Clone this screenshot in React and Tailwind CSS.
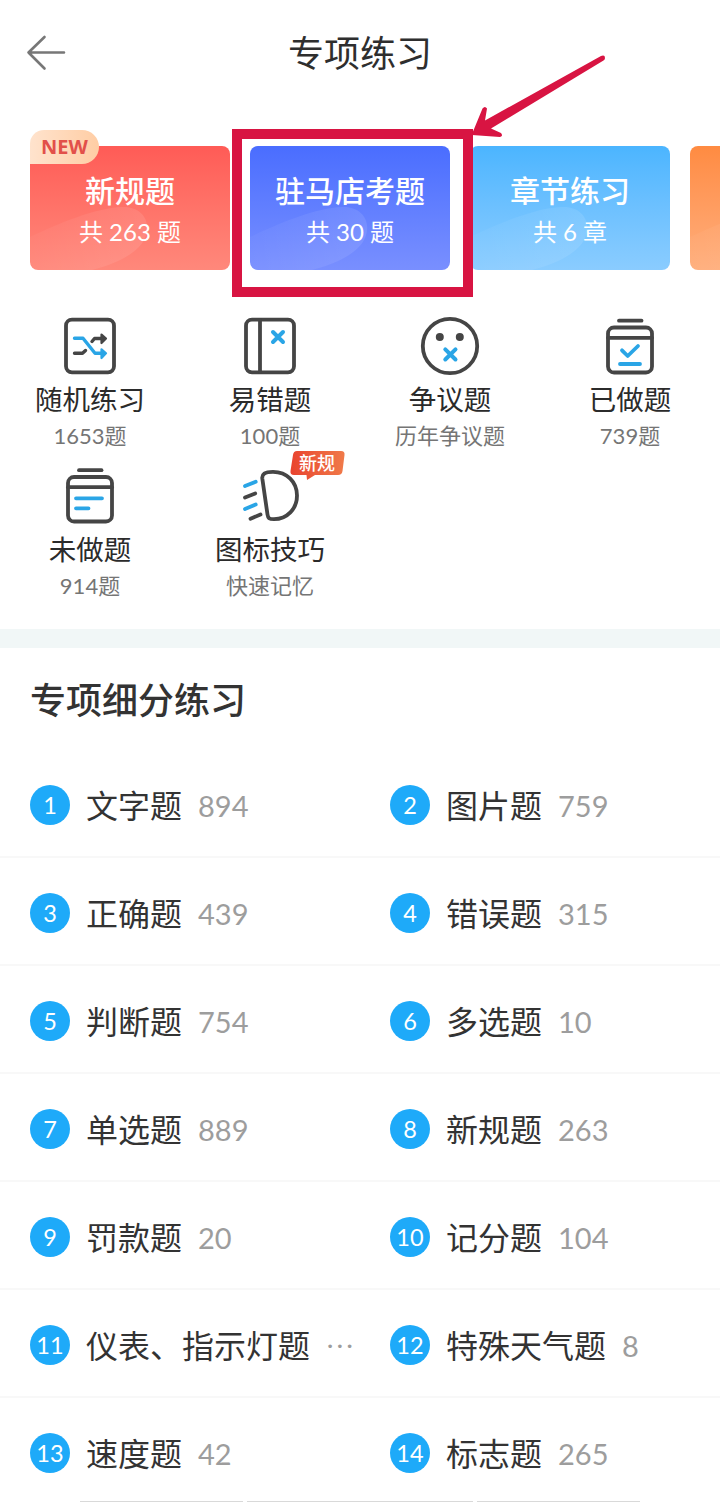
const DARK = "#454545";
const BLUE = "#2aa5e6";

const cards = [
	{ title: "新规题", sub: "共 263 题", bg: "from-[#ff5b56] to-[#ff887b]", isNew: true },
	{ title: "驻马店考题", sub: "共 30 题", bg: "from-[#4a6dff] to-[#798fff]", marked: true },
	{ title: "章节练习", sub: "共 6 章", bg: "from-[#4bb5ff] to-[#8accff]" },
	{ title: "", sub: "", bg: "from-[#ff8b41] to-[#ffae7c]" },
];

const tools = [
	{ label: "随机练习", sub: "1653题", Icon: ShuffleIcon },
	{ label: "易错题", sub: "100题", Icon: BookIcon },
	{ label: "争议题", sub: "历年争议题", Icon: FaceIcon },
	{ label: "已做题", sub: "739题", Icon: DoneIcon },
	{ label: "未做题", sub: "914题", Icon: TodoIcon },
	{ label: "图标技巧", sub: "快速记忆", Icon: LampIcon, tag: "新规" },
];

const topics = [
	["文字题", "894"],
	["图片题", "759"],
	["正确题", "439"],
	["错误题", "315"],
	["判断题", "754"],
	["多选题", "10"],
	["单选题", "889"],
	["新规题", "263"],
	["罚款题", "20"],
	["记分题", "104"],
	["仪表、指示灯题", "···"],
	["特殊天气题", "8"],
	["速度题", "42"],
	["标志题", "265"],
];

function IconBase({ children }) {
	return (
		<svg
			viewBox="0 0 60 60"
			className="size-[60px]"
			fill="none"
			stroke={DARK}
			strokeWidth="3.8"
			strokeLinecap="round"
			strokeLinejoin="round"
		>
			{children}
		</svg>
	);
}

function ShuffleIcon() {
	return (
		<IconBase>
			<rect x="6" y="3.7" width="48" height="52.6" rx="6" />
			<path d="M14.5 37.3H22.5L25.5 34.5M32 25.5L34.5 22.5H42" strokeWidth="3.4" />
			<path d="M41.5 18.5L46 22.5L41.5 27Z" fill={DARK} strokeWidth="2.2" />
			<path d="M14.5 22.3H23L35 37.3H42" stroke={BLUE} strokeWidth="3.4" />
			<path d="M41.5 33.3L46 37.3L41.5 42Z" fill={BLUE} stroke={BLUE} strokeWidth="2.2" />
		</IconBase>
	);
}

function BookIcon() {
	return (
		<IconBase>
			<rect x="6" y="3.7" width="48" height="52.6" rx="6" />
			<path d="M20 4V56" />
			<path d="M33 16L43 26M43 16L33 26" stroke={BLUE} strokeWidth="4" />
		</IconBase>
	);
}

function FaceIcon() {
	return (
		<IconBase>
			<circle cx="30" cy="30" r="27.2" />
			<circle cx="19.8" cy="21" r="4" fill={DARK} stroke="none" />
			<circle cx="39.8" cy="21" r="4" fill={DARK} stroke="none" />
			<path d="M25.3 33.3L35.5 43.5M35.5 33.3L25.3 43.5" stroke={BLUE} strokeWidth="4" />
		</IconBase>
	);
}

function DoneIcon() {
	return (
		<IconBase>
			<path d="M19 4.7H41.5" />
			<rect x="8" y="11.5" width="44" height="45" rx="6" />
			<path d="M8 21.8H52" />
			<path d="M22 34.3L27.7 40L38 30M20 48H40" stroke={BLUE} />
		</IconBase>
	);
}

function TodoIcon() {
	return (
		<IconBase>
			<path d="M19 4.2H41.5" />
			<rect x="8" y="11" width="44" height="44.5" rx="6" />
			<path d="M8 21.2H52" />
			<path d="M16 32.3H42M16 42.3H28.5" stroke={BLUE} />
		</IconBase>
	);
}

function LampIcon() {
	return (
		<IconBase>
			<path d="M22.3 12.5C21.8 8.3 24.5 5.8 33 5.8C47 5.8 57 16 57 29.5C57 43 47 53.2 34 53.2C29 53.2 28 52 27.5 48.5Z" />
			<path d="M5 20L15.7 15.8M5 43L15.7 38.5" stroke={BLUE} />
			<path d="M5 31.5L15.2 27.4M10.5 52.8L20.5 48.5" />
		</IconBase>
	);
}

function Card({ title, sub, bg, isNew, marked }) {
	return (
		<div className="relative h-[124px] w-[200px] shrink-0">
			<div
				className={`relative flex h-full flex-col items-center overflow-hidden rounded-lg bg-linear-to-b pt-[22px] text-white ${bg}`}
			>
				<svg viewBox="0 0 200 124" className="absolute inset-0">
					<defs>
						<linearGradient id="swoosh" x1="0" x2="1" y1="0" y2="0">
							<stop offset="0" stopColor="#fff" stopOpacity="0.03" />
							<stop offset="1" stopColor="#fff" stopOpacity="0.1" />
						</linearGradient>
					</defs>
					<path
						d="M0 91C30 77 65 62 92 61C112 60 122 76 115 92C108 108 85 118 62 124H0Z"
						fill="url(#swoosh)"
					/>
				</svg>
				<div className="relative h-[46px] text-[30px] leading-11 font-medium">{title}</div>
				<div className="relative h-9 text-2xl leading-9">{sub}</div>
			</div>
			{isNew && (
				<div className="absolute -top-4 left-0 flex h-[34px] w-[69px] items-center justify-center rounded-l-[14px] rounded-r-[17px] rounded-bl-none bg-linear-to-r from-[#ffe3cd] to-[#ffcda4] font-['Open_Sans',sans-serif] text-[20px] font-bold text-[#e2504a]">
					NEW
				</div>
			)}
			{marked && (
				<div className="absolute -top-[17px] -left-[18px] z-10 h-[168px] w-[241px] border-10 border-[#d81442]" />
			)}
		</div>
	);
}

function Tag({ text }) {
	return (
		<div className="absolute -top-4 left-[49px] h-[30px] w-14">
			<svg viewBox="0 0 56 30" className="absolute inset-0">
				<defs>
					<linearGradient id="tag" x1="0" x2="1" y1="0" y2="0">
						<stop offset="0" stopColor="#e9432f" />
						<stop offset="1" stopColor="#f07a49" />
					</linearGradient>
				</defs>
				<path
					d="M8 1H52Q56 1 55.5 5L53.5 21Q53 25 49 25H26L18 30L17.5 25H5Q1 25 1.5 21L4 5Q4.5 1 8 1Z"
					fill="url(#tag)"
				/>
			</svg>
			<span className="relative block text-center text-lg leading-[26px] font-medium text-white">
				{text}
			</span>
		</div>
	);
}

function Tool({ label, sub, Icon, tag }) {
	return (
		<div className="flex h-[150px] flex-col items-center text-center">
			<div className="relative">
				<Icon />
				{tag && <Tag text={tag} />}
			</div>
			<div className="mt-1 h-10 text-[27.5px] leading-10 text-[#2b2b2b]">{label}</div>
			<div className="h-8 text-[22px] leading-8 text-[#757575]">{sub}</div>
		</div>
	);
}

function Topic({ index, name, count }) {
	return (
		<div className="flex h-[108px] items-center border-b-2 border-[#f8f8f8] pt-[3px] pl-[30px]">
			<span className="flex size-10 items-center justify-center rounded-full bg-[#1eaaf9] text-[23.5px] leading-10 text-white">
				{index}
			</span>
			<span className="mt-[3px] ml-4 text-[32px] leading-10 text-[#333]">{name}</span>
			{count === "···" ? (
				<span className="mb-0.5 ml-[17px] text-2xl leading-10 tracking-[3.5px] text-[#9d9d9d]">
					{count}
				</span>
			) : (
				<span className="mt-[3px] ml-4 text-[29px] leading-10 text-[#9d9d9d]">{count}</span>
			)}
		</div>
	);
}

export default function App() {
	return (
		<div className="relative h-[1502px] w-[720px] overflow-hidden bg-white font-['Lato','Noto_Sans_CJK_SC',sans-serif]">
			<header className="grid h-[106px] grid-cols-[100px_1fr_100px] items-center">
				<svg
					viewBox="0 0 40 36"
					className="ml-[26px] h-9 w-10"
					fill="none"
					stroke="#777"
					strokeWidth="2.6"
					strokeLinecap="round"
					strokeLinejoin="round"
				>
					<path d="M18.5 2L2.5 17.5L18.5 33.5M2.5 17.5H38" />
				</svg>
				<h1 className="text-center text-4xl text-[#2e2e2e]">专项练习</h1>
			</header>

			<div className="flex h-[210px] gap-5 overflow-hidden pt-10 pl-[30px]">
				{cards.map((c, i) => (
					<Card key={i} {...c} />
				))}
			</div>

			<div className="grid h-[313px] grid-cols-4 content-start">
				{tools.map((t) => (
					<Tool key={t.label} {...t} />
				))}
			</div>

			<div className="h-[19px] bg-[#f1f7f7]" />

			<h2 className="h-[102px] pl-[30px] text-4xl leading-[104px] font-medium text-[#333]">
				专项细分练习
			</h2>

			<div className="grid grid-cols-2">
				{topics.map(([name, count], i) => (
					<Topic key={name + i} index={i + 1} name={name} count={count} />
				))}
			</div>

			{/* Top edge of the bottom bar */}
			<div className="absolute bottom-0 left-20 flex h-px w-[560px] gap-1">
				<span className="w-[163px] bg-[#d9d9d9]" />
				<span className="flex-1 bg-[#d9d9d9]" />
				<span className="w-[163px] bg-[#d9d9d9]" />
			</div>

			{/* Red pointer arrow */}
			<svg viewBox="0 0 140 90" className="absolute top-[50px] left-[468px] z-20 h-[90px] w-[140px]">
				<path
					d="M4 84L14.5 58.5Q17 55.5 19 58.5L17 70.5L133 6Q137 4.5 137 8Q137 9.5 135.5 10.5L23 78.5L33 83Q35.5 86 32 87L4 85Z"
					fill="#d81442"
				/>
			</svg>
		</div>
	);
}
